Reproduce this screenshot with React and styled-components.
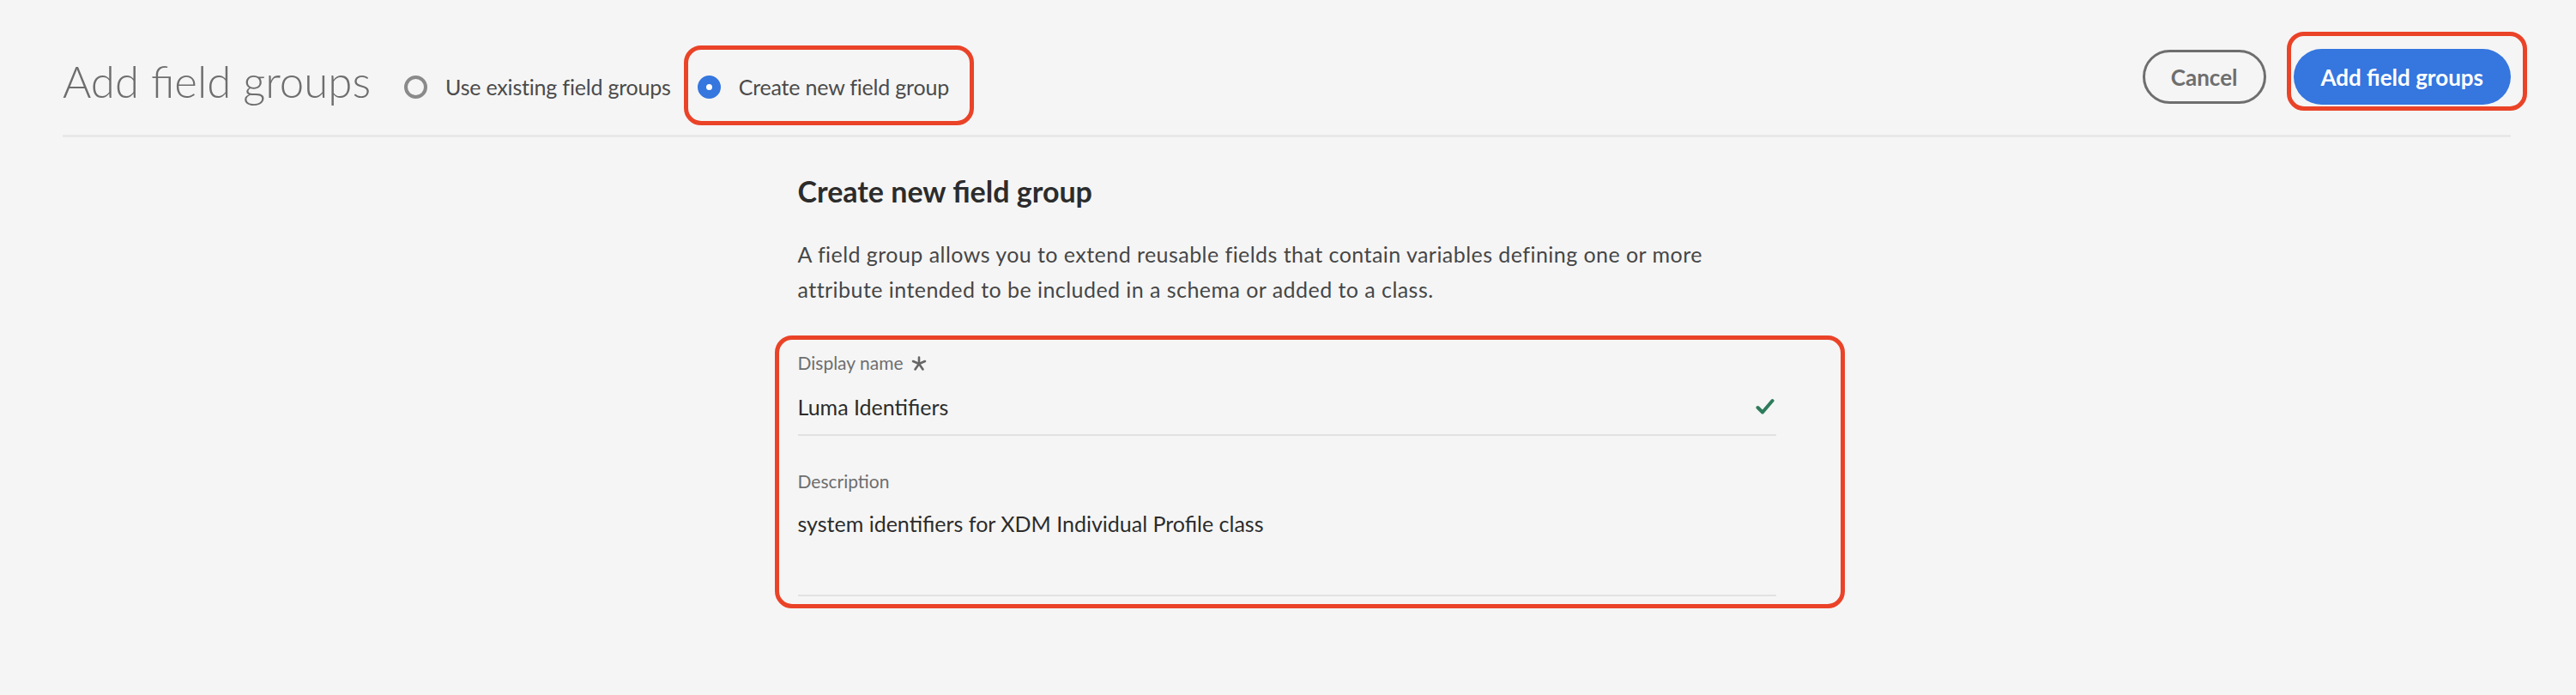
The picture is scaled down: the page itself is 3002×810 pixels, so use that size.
import React from "react";
import styled, { createGlobalStyle } from "styled-components";

const GlobalStyle = createGlobalStyle`
    html, body {
        margin: 0;
        background: #f5f5f5;
    }
    body {
        font-family: Lato, "Noto Sans", sans-serif;
    }
`;

const Page = styled.div`
    min-height: 810px;
    padding: 0 76px 0 73px;
    box-sizing: border-box;
`;

const Header = styled.header`
    display: flex;
    align-items: flex-start;
    height: 157px;
    border-bottom: 3px solid #e8e8e8;
`;

const Title = styled.h1`
    margin: 65px 0 0;
    font-size: 51px;
    font-weight: 300;
    line-height: 60px;
    color: #6e6e6e;
    white-space: nowrap;
`;

const RadioGroup = styled.div`
    display: flex;
    align-items: flex-start;
    margin: 53px 0 0 39px;
`;

const RadioOption = styled.label`
    display: flex;
    align-items: center;
    gap: 21px;
    margin-top: ${(p) => p.$top || 0}px;
    font-size: 25px;
    letter-spacing: -0.2px;
    line-height: 32px;
    color: #4b4b4b;
    white-space: nowrap;
`;

const RadioCircle = styled.span`
    width: 27px;
    height: 27px;
    box-sizing: border-box;
    border-radius: 50%;
    border: ${(p) => (p.$checked ? "10px solid #3576df" : "4px solid #8a8a8a")};
    background: ${(p) => (p.$checked ? "#fff" : "transparent")};
`;

const Highlight = styled.div`
    border: 5px solid #ea4328;
    border-radius: 20px;
    padding: ${(p) => p.$pad};
    margin: ${(p) => p.$margin || 0};
`;

const Spacer = styled.div`
    flex: 1;
`;

const Actions = styled.div`
    display: flex;
    align-items: flex-start;
    margin: 37px -19px 0 0;
`;

const Button = styled.button`
    box-sizing: border-box;
    font-family: Lato, "Noto Sans", sans-serif;
    font-size: 26px;
    font-weight: 700;
    white-space: nowrap;
    cursor: pointer;
    height: ${(p) => (p.$primary ? 65 : 63)}px;
    border-radius: 33px;
    padding: 0 ${(p) => (p.$primary ? 32 : 30)}px;
    border: ${(p) => (p.$primary ? "none" : "3px solid #6e6e6e")};
    background: ${(p) => (p.$primary ? "#3576df" : "transparent")};
    color: ${(p) => (p.$primary ? "#fff" : "#6e6e6e")};
    margin: ${(p) => (p.$primary ? "0" : "21px 24px 0 0")};
`;

const Main = styled.main`
    width: 1140px;
    margin: 0 auto;
`;

const Heading = styled.h2`
    margin: 43px 0 0;
    font-size: 34px;
    font-weight: 700;
    line-height: 40px;
    color: #2c2c2c;
`;

const Intro = styled.p`
    margin: 33px 0 0;
    max-width: 1110px;
    font-size: 25px;
    letter-spacing: 0.45px;
    line-height: 41px;
    color: #464646;
`;

const Field = styled.div`
    margin-top: ${(p) => p.$top || 0}px;
`;

const Label = styled.div`
    display: flex;
    align-items: center;
    gap: 9px;
    font-size: 21px;
    line-height: 26px;
    color: #6e6e6e;
`;

const InputRow = styled.div`
    display: flex;
    align-items: center;
    justify-content: space-between;
    margin-top: ${(p) => p.$gap}px;
    padding: 0 2px ${(p) => p.$bottom}px 0;
    border-bottom: 2px solid #e1e1e1;
    font-size: 25px;
    line-height: 32px;
    color: #2c2c2c;
`;

function Asterisk() {
    return (
        <svg width="18" height="17" viewBox="0 0 18 17">
            <g stroke="#666" strokeWidth="2.6" strokeLinecap="round">
                <line x1="9" y1="9" x2="9" y2="1.5" />
                <line x1="9" y1="9" x2="2" y2="6" />
                <line x1="9" y1="9" x2="16" y2="6" />
                <line x1="9" y1="9" x2="4.5" y2="15.5" />
                <line x1="9" y1="9" x2="13.5" y2="15.5" />
            </g>
        </svg>
    );
}

function Check() {
    return (
        <svg width="22" height="20" viewBox="0 0 22 20">
            <path d="M2.5 11 L8 16.5 L19.5 3" fill="none" stroke="#2d7b5b" strokeWidth="4" strokeLinecap="round" strokeLinejoin="round" />
        </svg>
    );
}

export default function App() {
    const [mode, setMode] = React.useState("new");

    return (
        <Page>
            <GlobalStyle />
            <Header>
                <Title>Add field groups</Title>
                <RadioGroup>
                    <RadioOption $top={32} onClick={() => setMode("existing")}>
                        <RadioCircle $checked={mode === "existing"} />
                        Use existing field groups
                    </RadioOption>
                    <Highlight $pad="27px 24px 24px 11px" $margin="0 0 0 15px">
                        <RadioOption onClick={() => setMode("new")}>
                            <RadioCircle $checked={mode === "new"} />
                            Create new field group
                        </RadioOption>
                    </Highlight>
                </RadioGroup>
                <Spacer />
                <Actions>
                    <Button>Cancel</Button>
                    <Highlight $pad="15px 14px 2px 3px">
                        <Button $primary>Add field groups</Button>
                    </Highlight>
                </Actions>
            </Header>

            <Main>
                <Heading>Create new field group</Heading>
                <Intro>
                    A field group allows you to extend reusable fields that contain variables defining one or more
                    attribute intended to be included in a schema or added to a class.
                </Intro>
                <Highlight $pad="14px 75px 9px 22px" $margin="33px -80px 0 -27px">
                    <Field>
                        <Label>
                            Display name <Asterisk />
                        </Label>
                        <InputRow $gap={22} $bottom={16}>
                            <span>Luma Identifiers</span>
                            <Check />
                        </InputRow>
                    </Field>
                    <Field $top={40}>
                        <Label>Description</Label>
                        <InputRow $gap={20} $bottom={67}>
                            <span>system identifiers for XDM Individual Profile class</span>
                        </InputRow>
                    </Field>
                </Highlight>
            </Main>
        </Page>
    );
}
